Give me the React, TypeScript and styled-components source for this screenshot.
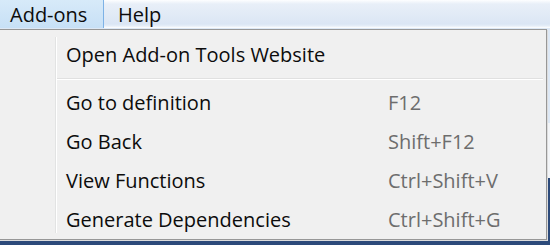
import styled, { createGlobalStyle } from "styled-components";

const GlobalStyle = createGlobalStyle`
	body {
		margin: 0;
		background: #2c4a7a;
	}
`;

const Screen = styled.div`
	position: relative;
	width: 550px;
	height: 245px;
	overflow: hidden;
	display: flex;
	flex-direction: column;
	font-family: "Open Sans", "Noto Sans", sans-serif;
	font-size: 20px;
	color: #0c0c0c;
`;

const MenuBar = styled.div`
	display: flex;
	height: 28px;
	flex-shrink: 0;
	background: linear-gradient(
		#fdfeff 0,
		#e8eff8 4px,
		#dbe6f4 24px,
		#e6eef8 26px,
		#ffffff 28px
	);
`;

const MenuTitle = styled.div<{ $active?: boolean }>`
	display: flex;
	align-items: center;
	box-sizing: border-box;
	height: ${(p) => (p.$active ? "30px" : "28px")};
	width: ${(p) => (p.$active ? "105px" : "auto")};
	margin-top: ${(p) => (p.$active ? "-1px" : "0")};
	margin-left: ${(p) => (p.$active ? "-1px" : "0")};
	padding: ${(p) => (p.$active ? "0 0 0 10px" : "0 13px 0 13px")};
	border: 1px solid ${(p) => (p.$active ? "#7db2e6" : "transparent")};
	background: ${(p) =>
		p.$active ? "linear-gradient(#d7eaf9, #c7e0f6)" : "transparent"};
	white-space: nowrap;
`;

const Backdrop = styled.div`
	flex: 1;
	background: linear-gradient(
		#dde8f5 0,
		#dde8f5 95px,
		#f3f5f8 95px,
		#f3f5f8 150px,
		#2c4a7a 150px
	);
`;

const Dropdown = styled.div`
	position: absolute;
	top: 29px;
	left: -1px;
	width: 548px;
	height: 211px;
	box-sizing: border-box;
	display: flex;
	border: 1px solid #979797;
	background: #f0f0f0;
	box-shadow: 1px 1px 0 #dcdcdc;
`;

const Gutter = styled.div`
	width: 55px;
	margin: 7px 0 6px;
	border-right: 1px solid #e2e3e3;
	box-shadow: 1px 0 0 #ffffff;
`;

const Items = styled.div`
	flex: 1;
	display: flex;
	flex-direction: column;
	padding: 5px 3px 0 0;
`;

const Item = styled.div`
	display: grid;
	grid-template-columns: 322px auto;
	align-items: center;
	height: 39px;
	padding-left: 10px;
	white-space: nowrap;
`;

const Shortcut = styled.span`
	color: #6d6d6d;
`;

const Separator = styled.div`
	height: 1px;
	margin: 4px 0 4px 1px;
	background: #e0e0e0;
	box-shadow: 0 1px 0 #ffffff;
`;

const items = [
	{ label: "Go to definition", keys: "F12" },
	{ label: "Go Back", keys: "Shift+F12" },
	{ label: "View Functions", keys: "Ctrl+Shift+V" },
	{ label: "Generate Dependencies", keys: "Ctrl+Shift+G" },
];

export default function App() {
	return (
		<Screen>
			<GlobalStyle />
			<MenuBar>
				<MenuTitle $active>Add-ons</MenuTitle>
				<MenuTitle>Help</MenuTitle>
			</MenuBar>
			<Backdrop />
			<Dropdown>
				<Gutter />
				<Items>
					<Item>
						<span>Open Add-on Tools Website</span>
					</Item>
					<Separator />
					{items.map((item) => (
						<Item key={item.label}>
							<span>{item.label}</span>
							<Shortcut>{item.keys}</Shortcut>
						</Item>
					))}
				</Items>
			</Dropdown>
		</Screen>
	);
}
